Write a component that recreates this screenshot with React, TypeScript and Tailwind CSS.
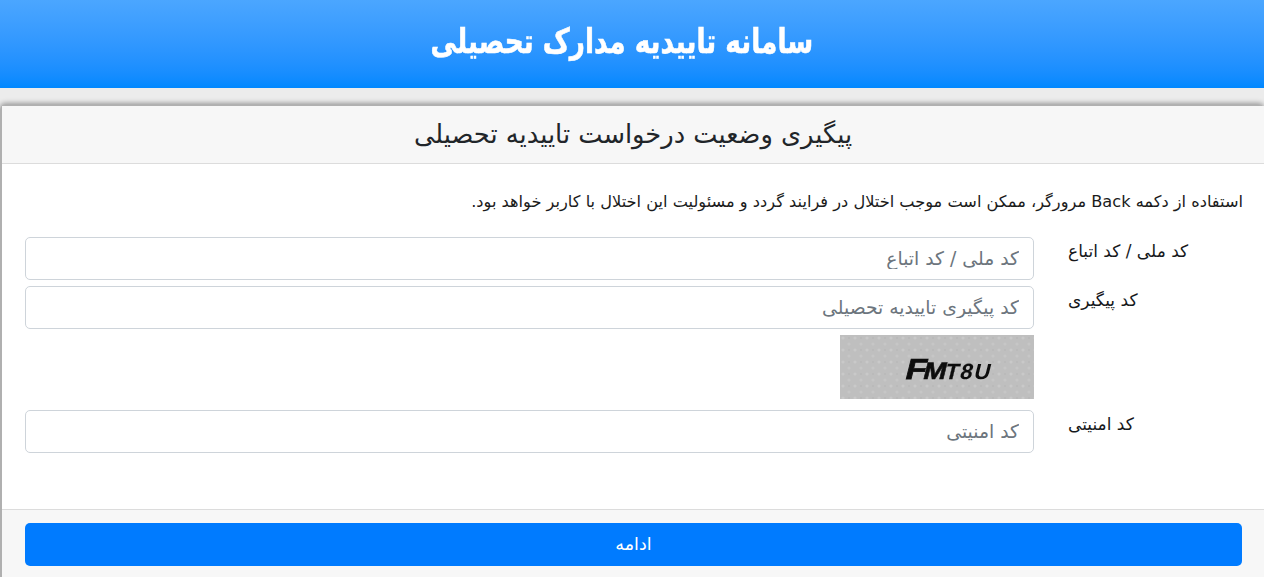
export default function App() {
  const field = "block w-full h-[43px] rounded-[5px] border border-[#ced4da] bg-white px-[14px] text-right text-[18.8px] text-[#495057] outline-none placeholder:text-[#6c757d]";
  const label = "w-[209px] shrink-0 pt-[2px] pl-[34px] text-left text-[17px] leading-[24px] text-[#16181b]";
  const rows = [
    { label: "کد ملی / کد اتباع", placeholder: "کد ملی / کد اتباع" },
    { label: "کد پیگیری", placeholder: "کد پیگیری تاییدیه تحصیلی" },
  ];
  const captcha = [
    { c: "F", x: 64, s: 29, sx: 1.15, w: 0.8 },
    { c: "M", x: 82, s: 24, sx: 1.15, w: 0.6 },
    { c: "T", x: 104, s: 22, sx: 1.0, w: 0.3 },
    { c: "8", x: 119, s: 22, sx: 1.0, w: 0.1 },
    { c: "U", x: 133, s: 22, sx: 1.0, w: 0 },
  ];
  return (
    <div dir="rtl" className="min-h-[577px] h-[577px] overflow-hidden bg-[#ececec] font-['DejaVu_Sans','Noto_Sans',sans-serif] text-[#212529]">
      <header className="flex h-[88px] items-center justify-center bg-gradient-to-b from-[#4ba6ff] to-[#0088ff]">
        <h1 className="-mt-[6px] mr-[20px] scale-x-[0.775] text-[34px] font-bold text-white [-webkit-text-stroke:0.6px_white]">سامانه تاییدیه مدارک تحصیلی</h1>
      </header>
      <main className="mt-[17px] rounded-t-[5px] border-t border-l-2 border-[#b0b0b0] bg-white shadow-[0_-2px_5px_rgba(0,0,0,0.35)]">
        <div className="flex h-[58px] items-center justify-center border-b border-[#dcdcdc] bg-[#f7f7f7]">
          <h2 className="text-[25.7px] text-[#212529]">پیگیری وضعیت درخواست تاییدیه تحصیلی</h2>
        </div>
        <div className="pt-[26px] pr-[21px] pl-[23px]">
          <p className="h-[47px] text-[16.2px] leading-[24px] text-[#1b1b1b]">
            استفاده از دکمه Back مرورگر، ممکن است موجب اختلال در فرایند گردد و مسئولیت این اختلال با کاربر خواهد بود.
          </p>
          <div className="flex flex-col">
            {rows.map((r) => (
              <div key={r.label} className="mb-[6px] flex">
                <label className={label}>{r.label}</label>
                <input className={field} placeholder={r.placeholder} />
              </div>
            ))}
            <div className="mb-[11px] flex">
              <div className="w-[209px] shrink-0" />
              <svg width="194" height="64" viewBox="0 0 194 64" className="block">
                <defs>
                  <pattern id="dots" width="12" height="12" patternUnits="userSpaceOnUse">
                    <rect width="12" height="12" fill="#bfbfbf" />
                    <circle cx="3" cy="3" r="1.6" fill="#c9c9c9" />
                    <circle cx="9" cy="9" r="1.6" fill="#c6c6c6" />
                    <circle cx="9" cy="3" r="1" fill="#b9b9b9" />
                  </pattern>
                  <filter id="soft">
                    <feGaussianBlur stdDeviation="0.5" />
                  </filter>
                </defs>
                <rect width="194" height="64" fill="url(#dots)" />
                <g filter="url(#soft)" fontFamily="Liberation Sans" fontWeight="700" fill="#111" stroke="#111">
                  {captcha.map((l) => (
                    <text key={l.c} direction="ltr" fontSize={l.s} strokeWidth={l.w} transform={`translate(${l.x} 44) skewX(-14) scale(${l.sx} 1)`}>{l.c}</text>
                  ))}
                </g>
              </svg>
            </div>
            <div className="flex">
              <label className={label}>کد امنیتی</label>
              <input className={field} placeholder="کد امنیتی" />
            </div>
          </div>
        </div>
        <div className="mt-[56px] h-[80px] border-t border-[#dcdcdc] bg-[#f7f7f7] pt-[13px] pr-[22px] pl-[23px]">
          <button className="h-[43px] w-full rounded-[5px] bg-[#007bff] text-[17.5px] text-white">ادامه</button>
        </div>
      </main>
    </div>
  );
}
